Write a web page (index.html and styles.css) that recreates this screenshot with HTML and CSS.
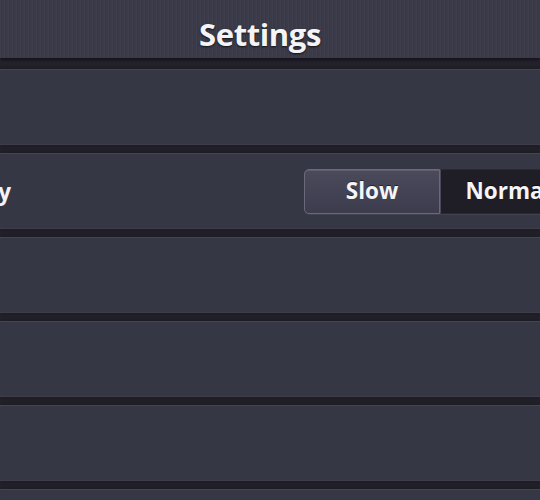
FILE: index.html
```html
<!DOCTYPE html>
<html lang="en">
<head>
<meta charset="utf-8">
<title>Settings</title>
<link rel="stylesheet" href="styles.css">
</head>
<body>
<header class="topbar">
  <h1 class="title">Settings</h1>
</header>
<main class="list">
  <div class="row"></div>
  <div class="row">
    <span class="label">Difficulty</span>
    <div class="segmented">
      <button class="seg seg-active">Slow</button>
      <button class="seg">Normal</button>
    </div>
  </div>
  <div class="row"></div>
  <div class="row"></div>
  <div class="row"></div>
  <div class="row"></div>
</main>
</body>
</html>
```

FILE: styles.css
```css
html, body {
  margin: 0;
  padding: 0;
}
body {
  width: 540px;
  height: 500px;
  overflow: hidden;
  background: #25242e;
  font-family: "Open Sans", "DejaVu Sans", sans-serif;
  color: #f3f3f5;
}
.topbar {
  height: 48px;
  padding-top: 10px;
  padding-right: 20px;
  background-color: #3a3a48;
  background-image: repeating-linear-gradient(90deg, rgba(255,255,255,0.025) 0 1px, rgba(0,0,0,0.03) 1px 2px, transparent 2px 4px);
  box-shadow: 0 2px 4px rgba(0,0,0,0.55);
  text-align: center;
  position: relative;
  z-index: 1;
}
.title {
  margin: 0;
  font-size: 31px;
  font-weight: 700;
  line-height: 48px;
  color: #f4f4f6;
  text-shadow: 0 1px 2px rgba(0,0,0,0.7);
  letter-spacing: -0.4px;
}
.list {
  display: flex;
  flex-direction: column;
  gap: 8px;
  padding-top: 11px;
}
.row {
  flex: 0 0 auto;
  height: 76px;
  box-sizing: border-box;
  background: #363744;
  border-top: 1px solid #45444f;
  border-bottom: 1px solid #3e3d49;
  box-shadow: 0 -3px 3px rgba(0,0,0,0.18), 0 3px 3px rgba(0,0,0,0.18);
  display: flex;
  align-items: center;
}
.label {
  width: 120px;
  margin-left: -109px;
  text-align: right;
  font-size: 22.5px;
  font-weight: 700;
  white-space: nowrap;
  color: #f3f3f5;
}
.segmented {
  margin-left: auto;
  margin-right: -36px;
  display: flex;
  height: 45px;
  flex: 0 0 auto;
  border-radius: 5px;
  box-shadow: 0 1px 0 rgba(255,255,255,0.06);
}
.seg {
  width: 136px;
  height: 45px;
  box-sizing: border-box;
  margin: 0;
  padding: 0 0 2px 0;
  font-family: "Open Sans", "DejaVu Sans", sans-serif;
  font-size: 22.5px;
  font-weight: 700;
  color: #f5f5f7;
  text-shadow: 0 -1px 0 rgba(0,0,0,0.5);
  background: #1f1e27;
  border: 1px solid #2a2933;
  border-left: 1px solid #4a4957;
  border-radius: 0 5px 5px 0;
}
.seg-active {
  background: linear-gradient(180deg, #4b4a5b 0%, #444355 50%, #3d3c4d 100%);
  border: 1px solid #6a6978;
  border-radius: 5px 0 0 5px;
  box-shadow: inset 0 1px 0 rgba(255,255,255,0.12);
}
```
